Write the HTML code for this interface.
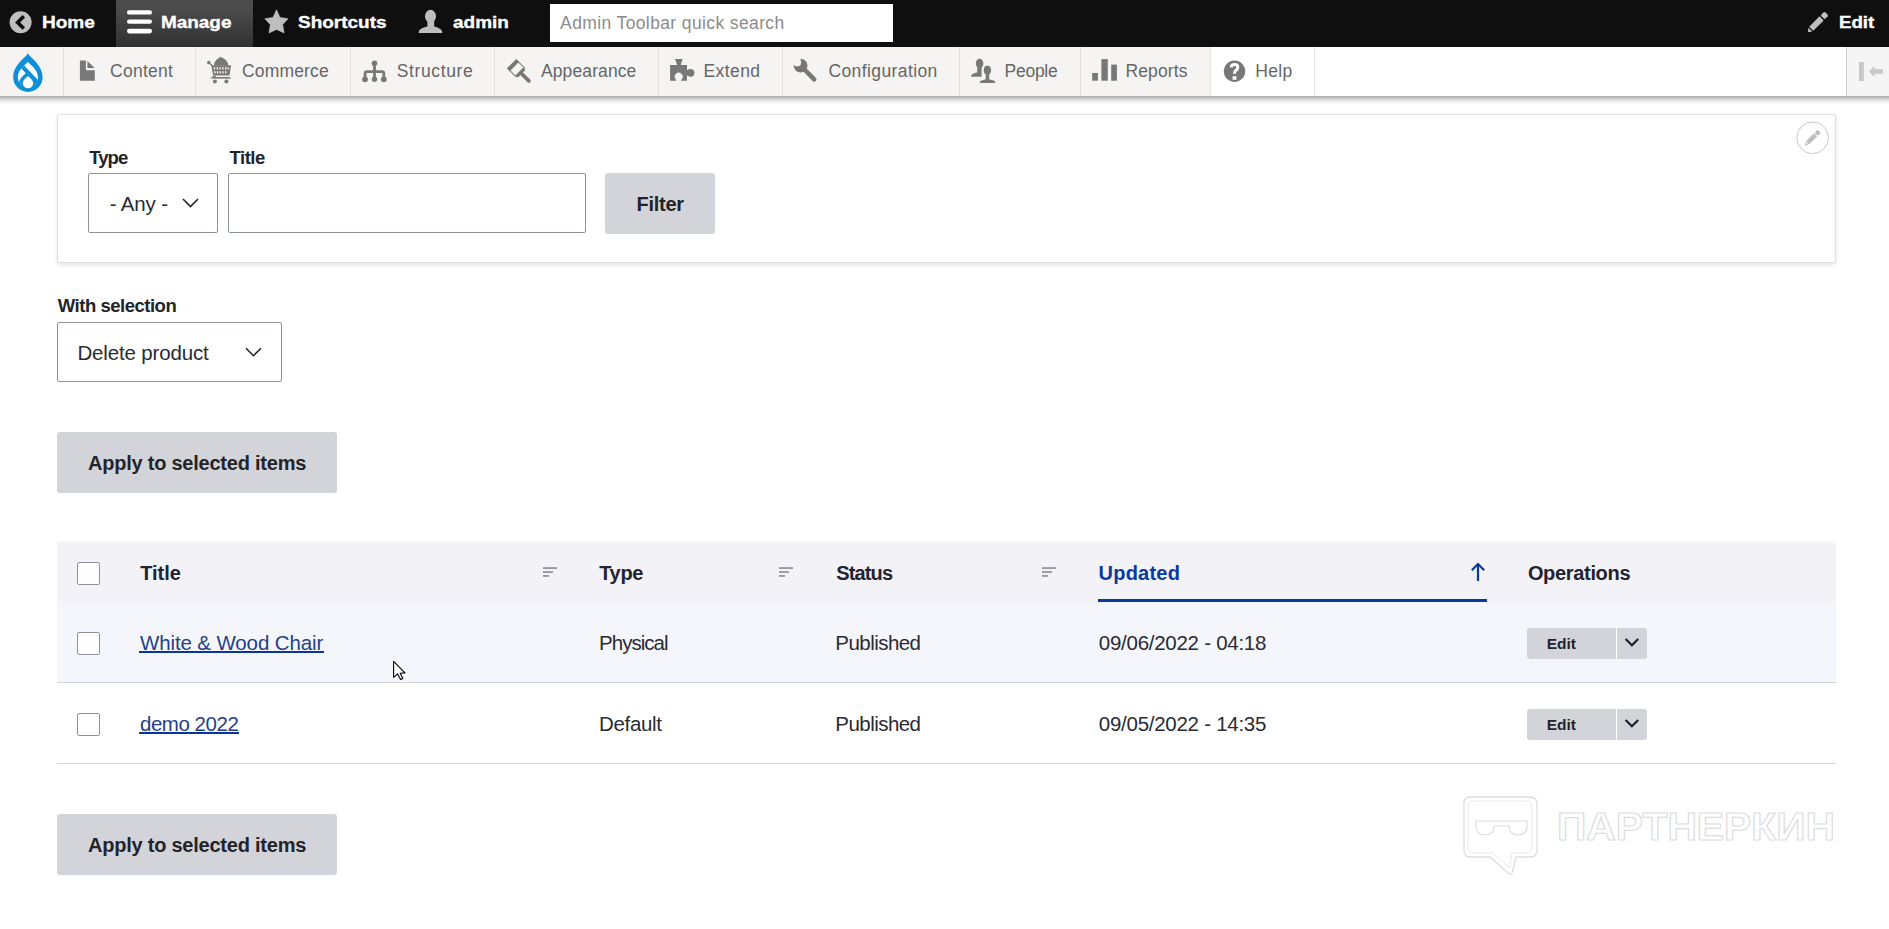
<!DOCTYPE html>
<html><head><meta charset="utf-8">
<style>
html,body{margin:0;padding:0;}
body{width:1889px;height:929px;overflow:hidden;position:relative;background:#fff;font-family:"Liberation Sans",sans-serif;}
.t{position:absolute;white-space:nowrap;font-family:"Liberation Sans",sans-serif;}
.a{position:absolute;}
#bar{position:absolute;left:0;top:0;width:1889px;height:47px;background:#0f0f0f;}
#manage{position:absolute;left:116px;top:0;width:137px;height:47px;background-image:linear-gradient(rgba(255,255,255,0.25) 20%,rgba(255,255,255,0) 200%);}
#search{position:absolute;left:550px;top:4px;width:343px;height:38px;background:#fff;}
#tray{position:absolute;left:0;top:47px;width:1889px;height:49px;background:#fff;}
#tshadow{position:absolute;left:0;top:96px;width:1889px;height:8px;background:linear-gradient(#a9a9a9,#b9b9b9 15%,#cfcfcf 35%,#e2e2e2 55%,#f1f1f1 75%,rgba(255,255,255,0));}
.ti{position:absolute;top:0;height:49px;background:#f5f4f2;border-right:1px solid #e3e2df;box-sizing:border-box;}
#fbox{position:absolute;left:57px;top:114px;width:1779px;height:149px;border:1px solid #dedfe4;box-sizing:border-box;border-radius:2px;box-shadow:0 2px 4px rgba(0,0,0,0.1);background:#fff;}
.sel{position:absolute;border:1px solid #8e929c;border-radius:2px;box-sizing:border-box;background:#fff;}
.btn{position:absolute;background:#d3d4d9;border-radius:3px;}
.cb{position:absolute;width:23px;height:23px;border:1px solid #8e929c;border-radius:2px;box-sizing:border-box;background:#fff;}
.sorti{position:absolute;width:14px;height:10px;}
</style></head><body>
<div id="bar"></div>
<div id="manage"></div>
<div id="search"></div>
<div id="tray">
  <div class="ti" style="left:0;width:64px;"></div>
  <div class="ti" style="left:64px;width:132px;"></div>
  <div class="ti" style="left:196px;width:155px;"></div>
  <div class="ti" style="left:351px;width:144px;"></div>
  <div class="ti" style="left:495px;width:164px;"></div>
  <div class="ti" style="left:659px;width:124px;"></div>
  <div class="ti" style="left:783px;width:177px;"></div>
  <div class="ti" style="left:960px;width:121px;"></div>
  <div class="ti" style="left:1081px;width:130px;"></div>
  <div class="ti" style="left:1211px;width:104px;background:#fff;"></div>
  <div class="ti" style="left:1846px;width:43px;background:#f5f5f5;border-right:0;border-left:1px solid #cfcfcf;"></div>
</div>
<div id="tshadow"></div>
<!-- top bar icons -->
<svg class="a" style="left:5px;top:6px" width="32" height="32" viewBox="0 0 32 32"><circle cx="15.6" cy="16.2" r="11" fill="#bfbfbf"/><polyline points="18.8,10.2 12.6,16.4 18.8,22.6" fill="none" stroke="#0f0f0f" stroke-width="3.6" stroke-linejoin="miter"/></svg>
<svg class="a" style="left:120px;top:6px" width="40" height="32" viewBox="0 0 40 32"><rect x="7" y="4.2" width="25" height="4.4" rx="2.2" fill="#fff"/><rect x="7" y="13.4" width="25" height="4.4" rx="2.2" fill="#fff"/><rect x="7" y="22.8" width="25" height="4.6" rx="2.3" fill="#fff"/></svg>
<svg class="a" style="left:260px;top:6px" width="32" height="32" viewBox="0 0 32 32"><polygon points="16.5,3.8 20.0,11.4 28.1,12.7 22.7,18.6 24.1,26.9 16.5,23.4 9.0,26.9 10.3,18.6 4.8,12.7 13.0,11.4" fill="#bebebe" stroke="#bebebe" stroke-width="0.6" stroke-linejoin="round"/></svg>
<svg class="a" style="left:414px;top:6px" width="32" height="32" viewBox="0 0 32 32"><ellipse cx="16.5" cy="10.2" rx="5.5" ry="6.4" fill="#bebebe"/><path d="M13.4 14 L13.4 20.6 C9 21.6 5.4 23.2 4.8 25.6 L4.8 27 L28.2 27 L28.2 25.6 C27.6 23.2 24 21.6 20.2 20.6 L20.2 14 Z" fill="#bebebe"/></svg>
<svg class="a" style="left:1800px;top:6px" width="34" height="34" viewBox="0 0 34 34"><g transform="translate(17.2,16.8) rotate(-45)"><polygon points="-13.2,0 -9.6,-2.6 -9.6,2.6" fill="#bebebe"/><rect x="-8.4" y="-2.9" width="14.6" height="5.8" fill="#bebebe"/><rect x="7.6" y="-2.9" width="5.6" height="5.8" rx="1.6" fill="#bebebe"/></g></svg>
<!-- tray icons -->
<svg class="a" style="left:8px;top:48px" width="40" height="48" viewBox="0 0 40 48">
 <path d="M19.9 5.4 C22.5 9.5 34.6 17 34.6 29.2 A14.7 14.7 0 0 1 5.2 29.2 C5.2 17 17.3 9.5 19.9 5.4 Z" fill="#0f8fd8"/>
 <clipPath id="dclip"><path d="M19.9 13.7 C21.2 15.6 30 21.5 30 29.2 A10.1 10.1 0 0 1 9.8 29.2 C9.8 21.5 18.6 15.6 19.9 13.7 Z"/></clipPath>
 <path d="M19.9 13.7 C21.2 15.6 30 21.5 30 29.2 A10.1 10.1 0 0 1 9.8 29.2 C9.8 21.5 18.6 15.6 19.9 13.7 Z" fill="#fff"/>
 <g clip-path="url(#dclip)"><line x1="6" y1="10.0" x2="36" y2="41.2" stroke="#0f8fd8" stroke-width="4.1"/>
 <path d="M19.9 23 C21.5 25.5 29.2 29.5 29.2 35.1 A9.1 9.1 0 0 1 11 35.1 C11 29.5 18.3 25.5 19.9 23 Z" fill="#0f8fd8"/></g>
 <path d="M19.9 27.9 C20.9 29.4 25.2 31.6 25.2 35.1 A5.2 5.2 0 0 1 14.8 35.1 C14.8 31.6 18.9 29.4 19.9 27.9 Z" fill="#fff"/>
</svg>
<svg class="a" style="left:74px;top:54px" width="28" height="32" viewBox="0 0 28 32"><path d="M5.9 6.4 H11.9 V16.2 H20.8 V26.7 H5.9 Z M13.4 7.1 L20.7 14.1 H13.4 Z" fill="#787878"/></svg>
<svg class="a" style="left:200px;top:52px" width="40" height="36" viewBox="0 0 40 36" fill="#787878" stroke="none">
 <circle cx="8.7" cy="10.5" r="1.7"/>
 <line x1="8.7" y1="10.5" x2="12.5" y2="14" stroke="#787878" stroke-width="1.6"/>
 <path d="M14 13.4 C14 9.2 17.2 6.6 20.4 5.2 L20.6 3.6 L20.9 5.2 C24.6 6.6 28.3 9.2 28.3 13.4 Z"/>
 <path d="M11.2 13.2 H31 L29.5 23.6 H13.2 Z"/>
 <g fill="#f5f4f2"><rect x="13.8" y="15.2" width="1.4" height="2.3"/><rect x="16.6" y="15.2" width="1.4" height="2.3"/><rect x="19.4" y="15.2" width="1.4" height="2.3"/><rect x="22.2" y="15.2" width="1.4" height="2.3"/><rect x="25" y="15.2" width="1.4" height="2.3"/><rect x="27.6" y="15.2" width="1.2" height="2.3"/>
 <rect x="14.2" y="19.2" width="1.4" height="2.2"/><rect x="16.9" y="19.2" width="1.4" height="2.2"/><rect x="19.6" y="19.2" width="1.4" height="2.2"/><rect x="22.3" y="19.2" width="1.4" height="2.2"/><rect x="25" y="19.2" width="1.4" height="2.2"/></g>
 <path d="M14 23.4 L10.2 26.5 L31 26.8 L29.7 25.1 L15.8 25.1 L15.5 23.6 Z"/>
 <circle cx="14.9" cy="29.4" r="2"/><circle cx="26.4" cy="29.4" r="2"/>
</svg>
<svg class="a" style="left:358px;top:54px" width="34" height="34" viewBox="0 0 34 34"><path d="M7.1 25 V19.4 Q7.1 17.6 8.9 17.6 H24 Q25.8 17.6 25.8 19.4 V25 M16.5 9 V25" fill="none" stroke="#787878" stroke-width="2.8"/><circle cx="16.5" cy="9.2" r="2.8" fill="#787878"/><circle cx="7" cy="25.3" r="2.9" fill="#787878"/><circle cx="16.5" cy="25.3" r="2.7" fill="#787878"/><circle cx="25.8" cy="25.3" r="2.9" fill="#787878"/></svg>
<svg class="a" style="left:502px;top:54px" width="34" height="34" viewBox="0 0 34 34"><g transform="translate(9.6,9.7) rotate(45)"><rect x="0" y="-6.6" width="4" height="13.2" fill="#787878"/><rect x="3" y="-6.1" width="9" height="12.2" fill="none" stroke="#787878" stroke-width="1"/><rect x="11" y="-5.6" width="3.2" height="11.2" rx="1" fill="#787878"/><path d="M13.5 -1.9 H24.4 A1.9 1.9 0 0 1 24.4 1.9 H13.5 Z" fill="#787878"/></g></svg>
<svg class="a" style="left:665px;top:54px" width="34" height="34" viewBox="0 0 34 34"><path d="M5.1 11 H12.1 L10 5.1 H17.6 L15.7 11 H22 V16.3 Q23.5 15.1 25.6 15.1 A3.8 3.8 0 0 1 25.6 22.7 Q23.5 22.7 22 21.6 V26.7 H15.9 Q16.2 25.6 17 24.9 A4 4 0 1 0 10.4 24.9 Q11.2 25.6 11.4 26.7 H5.1 Z" fill="#787878"/></svg>
<svg class="a" style="left:789px;top:54px" width="34" height="34" viewBox="0 0 34 34"><circle cx="11.6" cy="11.6" r="6.9" fill="#787878"/><line x1="13" y1="13" x2="25.2" y2="25.4" stroke="#787878" stroke-width="4.6" stroke-linecap="round"/><circle cx="8.2" cy="8.4" r="3.9" fill="#f5f4f2"/><rect x="2" y="2" width="6.5" height="6.5" transform="rotate(45 8.2 8.4)" fill="#f5f4f2"/></svg>
<svg class="a" style="left:966px;top:54px" width="34" height="34" viewBox="0 0 34 34">
 <ellipse cx="13.6" cy="9.4" rx="3.8" ry="4.6" fill="#787878"/><path d="M11.3 12 V18.2 C8 19 5.5 20.2 5.1 21.8 V22.8 H15.6 V12 Z" fill="#787878"/>
 <g stroke="#f5f4f2" stroke-width="1.2"><ellipse cx="21.4" cy="16.2" rx="3.9" ry="4.7" fill="#787878"/><path d="M19.7 19 V24.6 C16 25.4 13.6 26.5 13.2 28 V29.6 H29.8 V28 C29.4 26.5 27 25.4 23.2 24.6 V19 Z" fill="#787878"/></g>
 <ellipse cx="21.4" cy="16.2" rx="3.6" ry="4.4" fill="#787878"/><rect x="19.7" y="19" width="3.5" height="6" fill="#787878"/>
</svg>
<svg class="a" style="left:1088px;top:54px" width="34" height="34" viewBox="0 0 34 34" fill="#787878"><rect x="4.2" y="19" width="5.7" height="7.7"/><rect x="13.4" y="5.1" width="6.4" height="21.6"/><rect x="23.2" y="10.6" width="5.7" height="16.1"/></svg>
<svg class="a" style="left:1218px;top:54px" width="34" height="34" viewBox="0 0 34 34"><circle cx="16.5" cy="17.2" r="10.7" fill="#787878"/><path d="M13.2 13.4 Q13.4 10.6 16.6 10.6 Q19.8 10.6 19.8 13.3 Q19.8 15 18 16.2 Q16.5 17.2 16.5 19.8" fill="none" stroke="#fff" stroke-width="3"/><rect x="14.6" y="22.2" width="3.8" height="3.6" fill="#fff"/></svg>
<svg class="a" style="left:1850px;top:54px" width="39" height="34" viewBox="0 0 39 34" fill="#c8c8c8"><rect x="9" y="8" width="4.8" height="19"/><path d="M19 17.5 L24.5 12 V15.2 H33 V19.8 H24.5 V23 Z"/></svg>

<div id="fbox"></div>
<div class="sel" style="left:88px;top:173px;width:130px;height:60px;"></div>
<div class="sel" style="left:228px;top:173px;width:358px;height:60px;"></div>
<div class="btn" style="left:605px;top:173px;width:110px;height:61px;"></div>
<div class="sel" style="left:57px;top:322px;width:225px;height:60px;"></div>
<div class="btn" style="left:57px;top:432px;width:280px;height:61px;"></div>
<div class="btn" style="left:57px;top:814px;width:280px;height:61px;"></div>
<!-- table -->
<div class="a" style="left:57px;top:540px;width:1779px;height:3px;background:linear-gradient(rgba(243,243,247,0),#f3f3f7);"></div>
<div class="a" style="left:57px;top:543px;width:1779px;height:59px;background:#f3f3f7;"></div>
<div class="a" style="left:57px;top:602px;width:1779px;height:80px;background:#f5f6fb;"></div>
<div class="a" style="left:57px;top:682px;width:1779px;height:1px;background:#d3d4db;"></div>
<div class="a" style="left:57px;top:763px;width:1779px;height:1px;background:#d3d4db;"></div>
<div class="a" style="left:1098px;top:599px;width:389px;height:3px;background:#0b399e;"></div>
<div class="cb" style="left:77px;top:562px;"></div>
<div class="cb" style="left:77px;top:632px;"></div>
<div class="cb" style="left:77px;top:713px;"></div>
<div class="btn" style="left:1527px;top:628px;width:120px;height:31px;"></div>
<div class="a" style="left:1616px;top:628px;width:1px;height:31px;background:#fff;"></div>
<div class="btn" style="left:1527px;top:709px;width:120px;height:31px;"></div>
<div class="a" style="left:1616px;top:709px;width:1px;height:31px;background:#fff;"></div>
<!-- select chevrons -->
<svg class="a" style="left:180px;top:195px" width="22" height="16" viewBox="0 0 22 16"><polyline points="3,4 10.5,11.5 18,4" fill="none" stroke="#232429" stroke-width="1.6"/></svg>
<svg class="a" style="left:243px;top:344px" width="22" height="16" viewBox="0 0 22 16"><polyline points="3,4.2 10.5,11.7 18,4.2" fill="none" stroke="#232429" stroke-width="1.6"/></svg>
<!-- sort icons -->
<svg class="a" style="left:543px;top:567px" width="14" height="11" viewBox="0 0 14 11" fill="#80838c"><rect x="0" y="0.3" width="14" height="1.5"/><rect x="0" y="4.3" width="10" height="1.5"/><rect x="0" y="8.2" width="6" height="1.5"/></svg>
<svg class="a" style="left:779px;top:567px" width="14" height="11" viewBox="0 0 14 11" fill="#80838c"><rect x="0" y="0.3" width="14" height="1.5"/><rect x="0" y="4.3" width="10" height="1.5"/><rect x="0" y="8.2" width="6" height="1.5"/></svg>
<svg class="a" style="left:1042px;top:567px" width="14" height="11" viewBox="0 0 14 11" fill="#80838c"><rect x="0" y="0.3" width="14" height="1.5"/><rect x="0" y="4.3" width="10" height="1.5"/><rect x="0" y="8.2" width="6" height="1.5"/></svg>
<!-- up arrow -->
<svg class="a" style="left:1468px;top:560px" width="20" height="24" viewBox="0 0 20 24"><path d="M10 4.5 V21" stroke="#0b399e" stroke-width="2.2" fill="none"/><polyline points="3.8,10.2 10,4 16.2,10.2" fill="none" stroke="#0b399e" stroke-width="2.2"/></svg>
<!-- edit chevrons -->
<svg class="a" style="left:1622px;top:634px" width="20" height="16" viewBox="0 0 20 16"><polyline points="3.6,5 9.9,11.2 16.2,5" fill="none" stroke="#1f2026" stroke-width="2.2"/></svg>
<svg class="a" style="left:1622px;top:715px" width="20" height="16" viewBox="0 0 20 16"><polyline points="3.6,5 9.9,11.2 16.2,5" fill="none" stroke="#1f2026" stroke-width="2.2"/></svg>
<!-- pencil circle -->
<svg class="a" style="left:1794px;top:120px" width="38" height="36" viewBox="0 0 38 36"><circle cx="18.6" cy="17.8" r="15.8" fill="#fff" stroke="#c9c9c9" stroke-width="1"/><g transform="translate(18.8,17.6) rotate(-45)"><polygon points="-11,0 -8.4,-1.9 -8.4,1.9" fill="#bdbdbd"/><rect x="-7.6" y="-2.2" width="11.4" height="4.4" fill="#bdbdbd"/><rect x="4.6" y="-2.2" width="4.4" height="4.4" rx="1.2" fill="#bdbdbd"/></g></svg>
<!-- cursor -->
<svg class="a" style="left:388px;top:656px" width="24" height="28" viewBox="388 656 24 28"><polygon points="393.6,661.3 393.6,677.3 397.6,673.9 400.6,679.6 402.8,678.4 400.2,673.3 405.0,672.9" fill="#fff" stroke="#000" stroke-width="1.1" stroke-linejoin="round"/></svg>
<!-- watermark -->
<svg class="a" style="left:1460px;top:792px" width="384" height="88" viewBox="1460 792 384 88">
 <path d="M1470 797 H1530 Q1537 797 1537 804 V850 Q1537 857 1530 857 H1516 L1512 873 Q1510 876 1508 873 L1490 857 H1470 Q1464 857 1464 850 V804 Q1464 797 1470 797 Z" fill="none" stroke="#dedede" stroke-width="1.3"/>
 <path d="M1474 801 H1526 Q1532 801 1532 807 V847 Q1532 853 1526 853 H1512 L1509.5 868 L1493 853 H1474 Q1468 853 1468 847 V807 Q1468 801 1474 801 Z" fill="none" stroke="#e8e8e8" stroke-width="1"/>
 <path d="M1476 821 H1527 V826 Q1527 835 1518 835 Q1509 835 1509 826 H1494 Q1494 835 1485 835 Q1476 835 1476 826 Z" fill="none" stroke="#dedede" stroke-width="1.2"/>
 <text x="1557" y="839.5" font-family="Liberation Sans" font-weight="bold" font-size="38" textLength="278" lengthAdjust="spacingAndGlyphs" fill="none" stroke="#dcdcdc" stroke-width="1.1">ПАРТНЕРКИН</text>
</svg>

<span class="t" style="left:41.5px;top:14px;font-weight:bold;font-size:17px;line-height:17px;letter-spacing:0.000px;color:#fff;transform:scaleX(1.1250);transform-origin:1.00px 0;-webkit-text-stroke:0.35px #fff;">Home</span>
<span class="t" style="left:161.0px;top:14px;font-weight:bold;font-size:17px;line-height:17px;letter-spacing:0.000px;color:#fff;transform:scaleX(1.1158);transform-origin:1.00px 0;-webkit-text-stroke:0.35px #fff;">Manage</span>
<span class="t" style="left:298.0px;top:14px;font-weight:bold;font-size:17px;line-height:17px;letter-spacing:0.000px;color:#fff;transform:scaleX(1.1156);transform-origin:0.00px 0;-webkit-text-stroke:0.35px #fff;">Shortcuts</span>
<span class="t" style="left:452.5px;top:14px;font-weight:bold;font-size:17px;line-height:17px;letter-spacing:0.000px;color:#fff;transform:scaleX(1.1172);transform-origin:0.00px 0;-webkit-text-stroke:0.35px #fff;">admin</span>
<span class="t" style="left:1839.0px;top:14px;font-weight:bold;font-size:17px;line-height:17px;letter-spacing:0.000px;color:#fff;transform:scaleX(1.1003);transform-origin:1.00px 0;-webkit-text-stroke:0.35px #fff;">Edit</span>
<span class="t" style="left:560.1px;top:15px;font-weight:normal;font-size:17.5px;line-height:17.5px;letter-spacing:0.379px;color:#8c8c8c;">Admin Toolbar quick search</span>
<span class="t" style="left:110.0px;top:63px;font-weight:normal;font-size:17.5px;line-height:17.5px;letter-spacing:0.262px;color:#666666;">Content</span>
<span class="t" style="left:242.0px;top:63px;font-weight:normal;font-size:17.5px;line-height:17.5px;letter-spacing:0.166px;color:#666666;">Commerce</span>
<span class="t" style="left:396.7px;top:63px;font-weight:normal;font-size:17.5px;line-height:17.5px;letter-spacing:0.629px;color:#666666;">Structure</span>
<span class="t" style="left:541.0px;top:63px;font-weight:normal;font-size:17.5px;line-height:17.5px;letter-spacing:0.106px;color:#666666;">Appearance</span>
<span class="t" style="left:703.5px;top:63px;font-weight:normal;font-size:17.5px;line-height:17.5px;letter-spacing:0.410px;color:#666666;">Extend</span>
<span class="t" style="left:828.4px;top:63px;font-weight:normal;font-size:17.5px;line-height:17.5px;letter-spacing:0.403px;color:#666666;">Configuration</span>
<span class="t" style="left:1004.5px;top:63px;font-weight:normal;font-size:17.5px;line-height:17.5px;letter-spacing:-0.252px;color:#666666;">People</span>
<span class="t" style="left:1125.4px;top:63px;font-weight:normal;font-size:17.5px;line-height:17.5px;letter-spacing:0.129px;color:#666666;">Reports</span>
<span class="t" style="left:1255.3px;top:63px;font-weight:normal;font-size:17.5px;line-height:17.5px;letter-spacing:0.314px;color:#666666;">Help</span>
<span class="t" style="left:89.2px;top:149px;font-weight:bold;font-size:18.5px;line-height:18.5px;letter-spacing:-0.906px;color:#232429;">Type</span>
<span class="t" style="left:229.6px;top:149px;font-weight:bold;font-size:18.5px;line-height:18.5px;letter-spacing:-0.502px;color:#232429;">Title</span>
<span class="t" style="left:109.7px;top:194px;font-weight:normal;font-size:20.5px;line-height:20.5px;letter-spacing:-0.157px;color:#2a2b33;">- Any -</span>
<span class="t" style="left:636.6px;top:194px;font-weight:bold;font-size:20px;line-height:20px;letter-spacing:-0.283px;color:#232429;">Filter</span>
<span class="t" style="left:57.8px;top:297px;font-weight:bold;font-size:18.5px;line-height:18.5px;letter-spacing:-0.487px;color:#232429;">With selection</span>
<span class="t" style="left:77.4px;top:343px;font-weight:normal;font-size:20.5px;line-height:20.5px;letter-spacing:-0.149px;color:#2a2b33;">Delete product</span>
<span class="t" style="left:88.0px;top:453px;font-weight:bold;font-size:20px;line-height:20px;letter-spacing:-0.231px;color:#232429;">Apply to selected items</span>
<span class="t" style="left:88.0px;top:835px;font-weight:bold;font-size:20px;line-height:20px;letter-spacing:-0.231px;color:#232429;">Apply to selected items</span>
<span class="t" style="left:140.2px;top:563px;font-weight:bold;font-size:20px;line-height:20px;letter-spacing:-0.007px;color:#222330;">Title</span>
<span class="t" style="left:599.2px;top:563px;font-weight:bold;font-size:20px;line-height:20px;letter-spacing:-0.324px;color:#222330;">Type</span>
<span class="t" style="left:836.2px;top:563px;font-weight:bold;font-size:20px;line-height:20px;letter-spacing:-0.840px;color:#222330;">Status</span>
<span class="t" style="left:1098.5px;top:563px;font-weight:bold;font-size:20px;line-height:20px;letter-spacing:0.236px;color:#0b399e;">Updated</span>
<span class="t" style="left:1527.9px;top:563px;font-weight:bold;font-size:20px;line-height:20px;letter-spacing:-0.328px;color:#222330;">Operations</span>
<div class="a" style="left:139px;top:651px;width:185px;height:2px;background:#0a3797;"></div>
<span class="t" style="left:140.0px;top:633px;font-weight:normal;font-size:20.5px;line-height:20.5px;letter-spacing:-0.124px;color:#243f86;">White &amp; Wood Chair</span>
<span class="t" style="left:599.0px;top:633px;font-weight:normal;font-size:20.5px;line-height:20.5px;letter-spacing:-0.969px;color:#2a2b33;">Physical</span>
<span class="t" style="left:835.3px;top:633px;font-weight:normal;font-size:20.5px;line-height:20.5px;letter-spacing:-0.542px;color:#2a2b33;">Published</span>
<span class="t" style="left:1098.8px;top:633px;font-weight:normal;font-size:20.5px;line-height:20.5px;letter-spacing:-0.266px;color:#2a2b33;">09/06/2022 - 04:18</span>
<span class="t" style="left:1546.8px;top:636px;font-weight:bold;font-size:15.5px;line-height:15.5px;letter-spacing:-0.071px;color:#232429;">Edit</span>
<div class="a" style="left:139px;top:732px;width:100px;height:2px;background:#0a3797;"></div>
<span class="t" style="left:140.0px;top:714px;font-weight:normal;font-size:20.5px;line-height:20.5px;letter-spacing:-0.472px;color:#243f86;">demo 2022</span>
<span class="t" style="left:599.0px;top:714px;font-weight:normal;font-size:20.5px;line-height:20.5px;letter-spacing:-0.326px;color:#2a2b33;">Default</span>
<span class="t" style="left:835.3px;top:714px;font-weight:normal;font-size:20.5px;line-height:20.5px;letter-spacing:-0.542px;color:#2a2b33;">Published</span>
<span class="t" style="left:1098.8px;top:714px;font-weight:normal;font-size:20.5px;line-height:20.5px;letter-spacing:-0.266px;color:#2a2b33;">09/05/2022 - 14:35</span>
<span class="t" style="left:1546.8px;top:717px;font-weight:bold;font-size:15.5px;line-height:15.5px;letter-spacing:-0.071px;color:#232429;">Edit</span>
</body></html>
